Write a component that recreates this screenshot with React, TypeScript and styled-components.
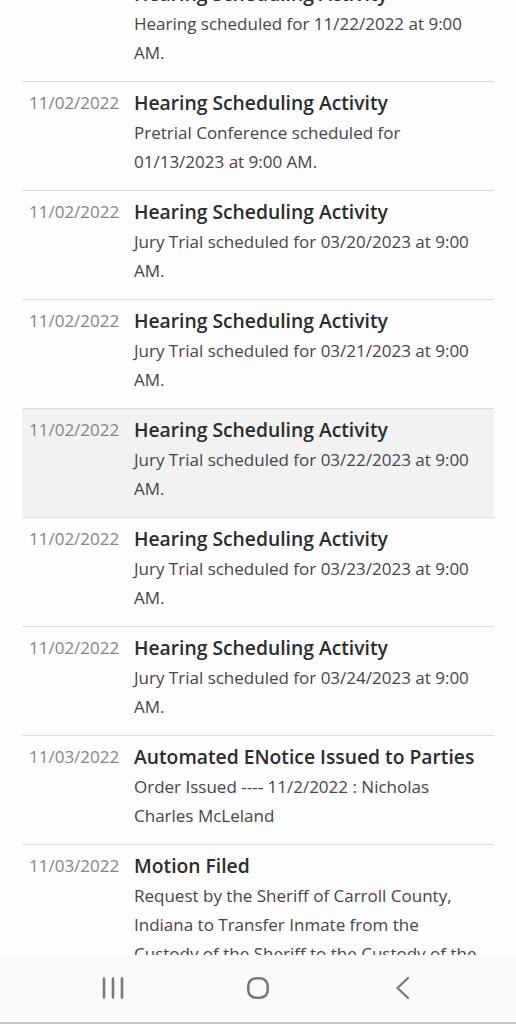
import styled, { createGlobalStyle } from "styled-components";

const GlobalStyle = createGlobalStyle`
  html, body {
    margin: 0;
    padding: 0;
    background: #fdfdfd;
  }
  body {
    font-family: "Open Sans", "Noto Sans", "Liberation Sans", sans-serif;
  }
`;

type Entry = {
  date: string;
  title: string;
  text: string;
  active?: boolean;
};

const entries: Entry[] = [
  {
    date: "11/02/2022",
    title: "Hearing Scheduling Activity",
    text: "Hearing scheduled for 11/22/2022 at 9:00 AM.",
  },
  {
    date: "11/02/2022",
    title: "Hearing Scheduling Activity",
    text: "Pretrial Conference scheduled for 01/13/2023 at 9:00 AM.",
  },
  {
    date: "11/02/2022",
    title: "Hearing Scheduling Activity",
    text: "Jury Trial scheduled for 03/20/2023 at 9:00 AM.",
  },
  {
    date: "11/02/2022",
    title: "Hearing Scheduling Activity",
    text: "Jury Trial scheduled for 03/21/2023 at 9:00 AM.",
  },
  {
    date: "11/02/2022",
    title: "Hearing Scheduling Activity",
    text: "Jury Trial scheduled for 03/22/2023 at 9:00 AM.",
    active: true,
  },
  {
    date: "11/02/2022",
    title: "Hearing Scheduling Activity",
    text: "Jury Trial scheduled for 03/23/2023 at 9:00 AM.",
  },
  {
    date: "11/02/2022",
    title: "Hearing Scheduling Activity",
    text: "Jury Trial scheduled for 03/24/2023 at 9:00 AM.",
  },
  {
    date: "11/03/2022",
    title: "Automated ENotice Issued to Parties",
    text: "Order Issued ---- 11/2/2022 : Nicholas Charles McLeland",
  },
  {
    date: "11/03/2022",
    title: "Motion Filed",
    text:
      "Request by the Sheriff of Carroll County, Indiana to Transfer Inmate from the Custody of the Sheriff to the Custody of the Department of Correction",
  },
];

export default function App() {
  return (
    <>
      <GlobalStyle />
      <Screen>
        <Viewport>
          <List>
            {entries.map((e, i) => (
              <Row key={i} $active={e.active}>
                <DateCell>{e.date}</DateCell>
                <Body>
                  <Title>{e.title}</Title>
                  <Text>{e.text}</Text>
                </Body>
              </Row>
            ))}
          </List>
        </Viewport>
        <NavBar>
          <NavButton aria-label="Recent apps">
            <svg width="24" height="24" viewBox="0 0 24 24">
              <g stroke="#7a7a7a" strokeWidth="2.6" strokeLinecap="round">
                <line x1="3" y1="2.5" x2="3" y2="21.5" />
                <line x1="12" y1="2.5" x2="12" y2="21.5" />
                <line x1="21" y1="2.5" x2="21" y2="21.5" />
              </g>
            </svg>
          </NavButton>
          <NavButton aria-label="Home">
            <svg width="24" height="24" viewBox="0 0 24 24">
              <rect
                x="2.3"
                y="2.3"
                width="19.4"
                height="19.4"
                rx="7.5"
                fill="none"
                stroke="#7a7a7a"
                strokeWidth="2.6"
              />
            </svg>
          </NavButton>
          <NavButton aria-label="Back">
            <svg width="24" height="24" viewBox="0 0 24 24">
              <polyline
                points="17,2 6.5,12 17,22"
                fill="none"
                stroke="#7a7a7a"
                strokeWidth="2.4"
                strokeLinecap="round"
                strokeLinejoin="round"
              />
            </svg>
          </NavButton>
        </NavBar>
      </Screen>
    </>
  );
}

const Screen = styled.div`
  height: 1024px;
  display: flex;
  flex-direction: column;
  overflow: hidden;
`;

const Viewport = styled.div`
  flex: 1;
  overflow: hidden;
`;

const List = styled.div`
  margin: -27px 22px 0;
`;

const Row = styled.div<{ $active?: boolean }>`
  display: grid;
  grid-template-columns: 105px 1fr;
  align-items: start;
  padding: 6px 16px 14px 7px;
  border-bottom: 1px solid #dcdcdc;
  background: ${(p) => (p.$active ? "#f2f2f2" : "transparent")};
`;

const DateCell = styled.div`
  font-size: 17px;
  line-height: 30px;
  color: #858585;
`;

const Body = styled.div`
  display: flex;
  flex-direction: column;
`;

const Title = styled.div`
  font-size: 19.3px;
  line-height: 30px;
  font-weight: 600;
  color: #2c2c2c;
`;

const Text = styled.div`
  font-size: 17px;
  line-height: 29px;
  color: #464646;
`;

const NavBar = styled.div`
  height: 67px;
  flex-shrink: 0;
  display: grid;
  grid-template-columns: repeat(3, 145px);
  justify-content: center;
  align-items: center;
  background: #fafafa;
  border-bottom: 2px solid #c6c6c6;
`;

const NavButton = styled.div`
  display: flex;
  justify-content: center;
  align-items: center;
  height: 100%;
  padding-bottom: 1px;
`;
